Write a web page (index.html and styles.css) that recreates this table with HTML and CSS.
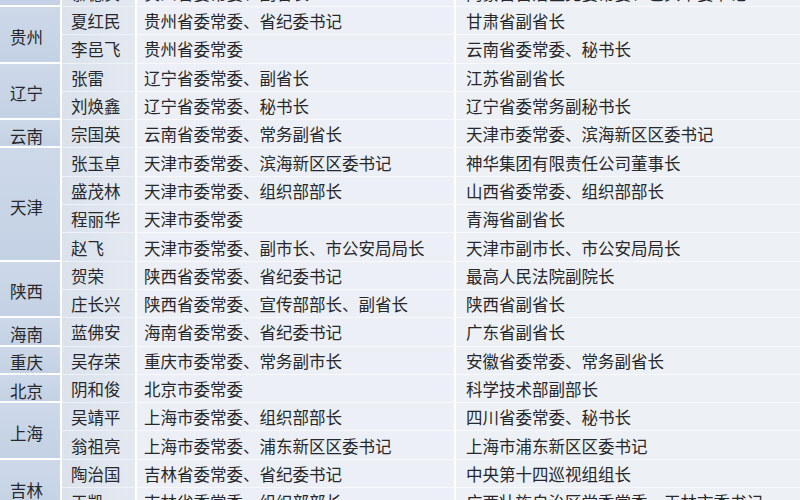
FILE: index.html
```html
<!DOCTYPE html>
<html lang="zh-CN">
<head>
<meta charset="utf-8">
<title>干部调整表</title>
<link rel="stylesheet" href="styles.css">
</head>
<body>
<div class="sheet">
  <div class="prov span1"></div><div class="name">慕德贵</div><div class="old">贵州省委常委、副省长</div><div class="new">内蒙古自治区党委常委、包头市委书记</div>

  <div class="prov span2">贵州</div><div class="name">夏红民</div><div class="old">贵州省委常委、省纪委书记</div><div class="new">甘肃省副省长</div>
  <div class="name">李邑飞</div><div class="old">贵州省委常委</div><div class="new">云南省委常委、秘书长</div>

  <div class="prov span2">辽宁</div><div class="name">张雷</div><div class="old">辽宁省委常委、副省长</div><div class="new">江苏省副省长</div>
  <div class="name">刘焕鑫</div><div class="old">辽宁省委常委、秘书长</div><div class="new">辽宁省委常务副秘书长</div>

  <div class="prov span1">云南</div><div class="name">宗国英</div><div class="old">云南省委常委、常务副省长</div><div class="new">天津市委常委、滨海新区区委书记</div>

  <div class="prov span4">天津</div><div class="name">张玉卓</div><div class="old">天津市委常委、滨海新区区委书记</div><div class="new">神华集团有限责任公司董事长</div>
  <div class="name">盛茂林</div><div class="old">天津市委常委、组织部部长</div><div class="new">山西省委常委、组织部部长</div>
  <div class="name">程丽华</div><div class="old">天津市委常委</div><div class="new">青海省副省长</div>
  <div class="name">赵飞</div><div class="old">天津市委常委、副市长、市公安局局长</div><div class="new">天津市副市长、市公安局局长</div>

  <div class="prov span2">陕西</div><div class="name">贺荣</div><div class="old">陕西省委常委、省纪委书记</div><div class="new">最高人民法院副院长</div>
  <div class="name">庄长兴</div><div class="old">陕西省委常委、宣传部部长、副省长</div><div class="new">陕西省副省长</div>

  <div class="prov span1">海南</div><div class="name">蓝佛安</div><div class="old">海南省委常委、省纪委书记</div><div class="new">广东省副省长</div>

  <div class="prov span1">重庆</div><div class="name">吴存荣</div><div class="old">重庆市委常委、常务副市长</div><div class="new">安徽省委常委、常务副省长</div>

  <div class="prov span1">北京</div><div class="name">阴和俊</div><div class="old">北京市委常委</div><div class="new">科学技术部副部长</div>

  <div class="prov span2">上海</div><div class="name">吴靖平</div><div class="old">上海市委常委、组织部部长</div><div class="new">四川省委常委、秘书长</div>
  <div class="name">翁祖亮</div><div class="old">上海市委常委、浦东新区区委书记</div><div class="new">上海市浦东新区区委书记</div>

  <div class="prov span2">吉林</div><div class="name">陶治国</div><div class="old">吉林省委常委、省纪委书记</div><div class="new">中央第十四巡视组组长</div>
  <div class="name">王凯</div><div class="old">吉林省委常委、组织部部长</div><div class="new">广西壮族自治区党委常委、玉林市委书记</div>
</div>
</body>
</html>
```

FILE: styles.css
```css
html, body {
  margin: 0;
  padding: 0;
  background: #ffffff;
  overflow: hidden;
}

.sheet {
  display: grid;
  grid-template-columns: 60px 73px 317px 1fr;
  grid-auto-rows: 28.3px;
  column-gap: 2px;
  width: 800px;
  margin-top: -21.3px;
  font-family: "Noto Sans CJK SC", "Noto Sans", sans-serif;
  font-size: 16.5px;
  color: #26282c;
}

.sheet > div {
  display: flex;
  align-items: center;
  box-sizing: border-box;
  white-space: nowrap;
  overflow: hidden;
  padding-top: 1px;
}

.prov {
  grid-column: 1;
  padding-left: 10px;
  background: linear-gradient(180deg, #cdd9e9 0%, #c3d1e4 100%);
  border-bottom: 2px solid #ffffff;
}
.sheet > .prov { padding-top: 5px; }
.span1 { grid-row: span 1; }
.span2 { grid-row: span 2; }
.span4 { grid-row: span 4; }

.name {
  grid-column: 2;
  padding-left: 9px;
  background: linear-gradient(90deg, #dbe2ec 0%, #e4e9f1 100%);
  border-bottom: 1px solid #eef1f6;
}

.old {
  grid-column: 3;
  padding-left: 7px;
  background: #eceff5;
  border-bottom: 1px solid #f8f9fc;
}

.new {
  grid-column: 4;
  padding-left: 10px;
  background: #edf0f5;
  border-bottom: 1px solid #f8f9fc;
}
```
